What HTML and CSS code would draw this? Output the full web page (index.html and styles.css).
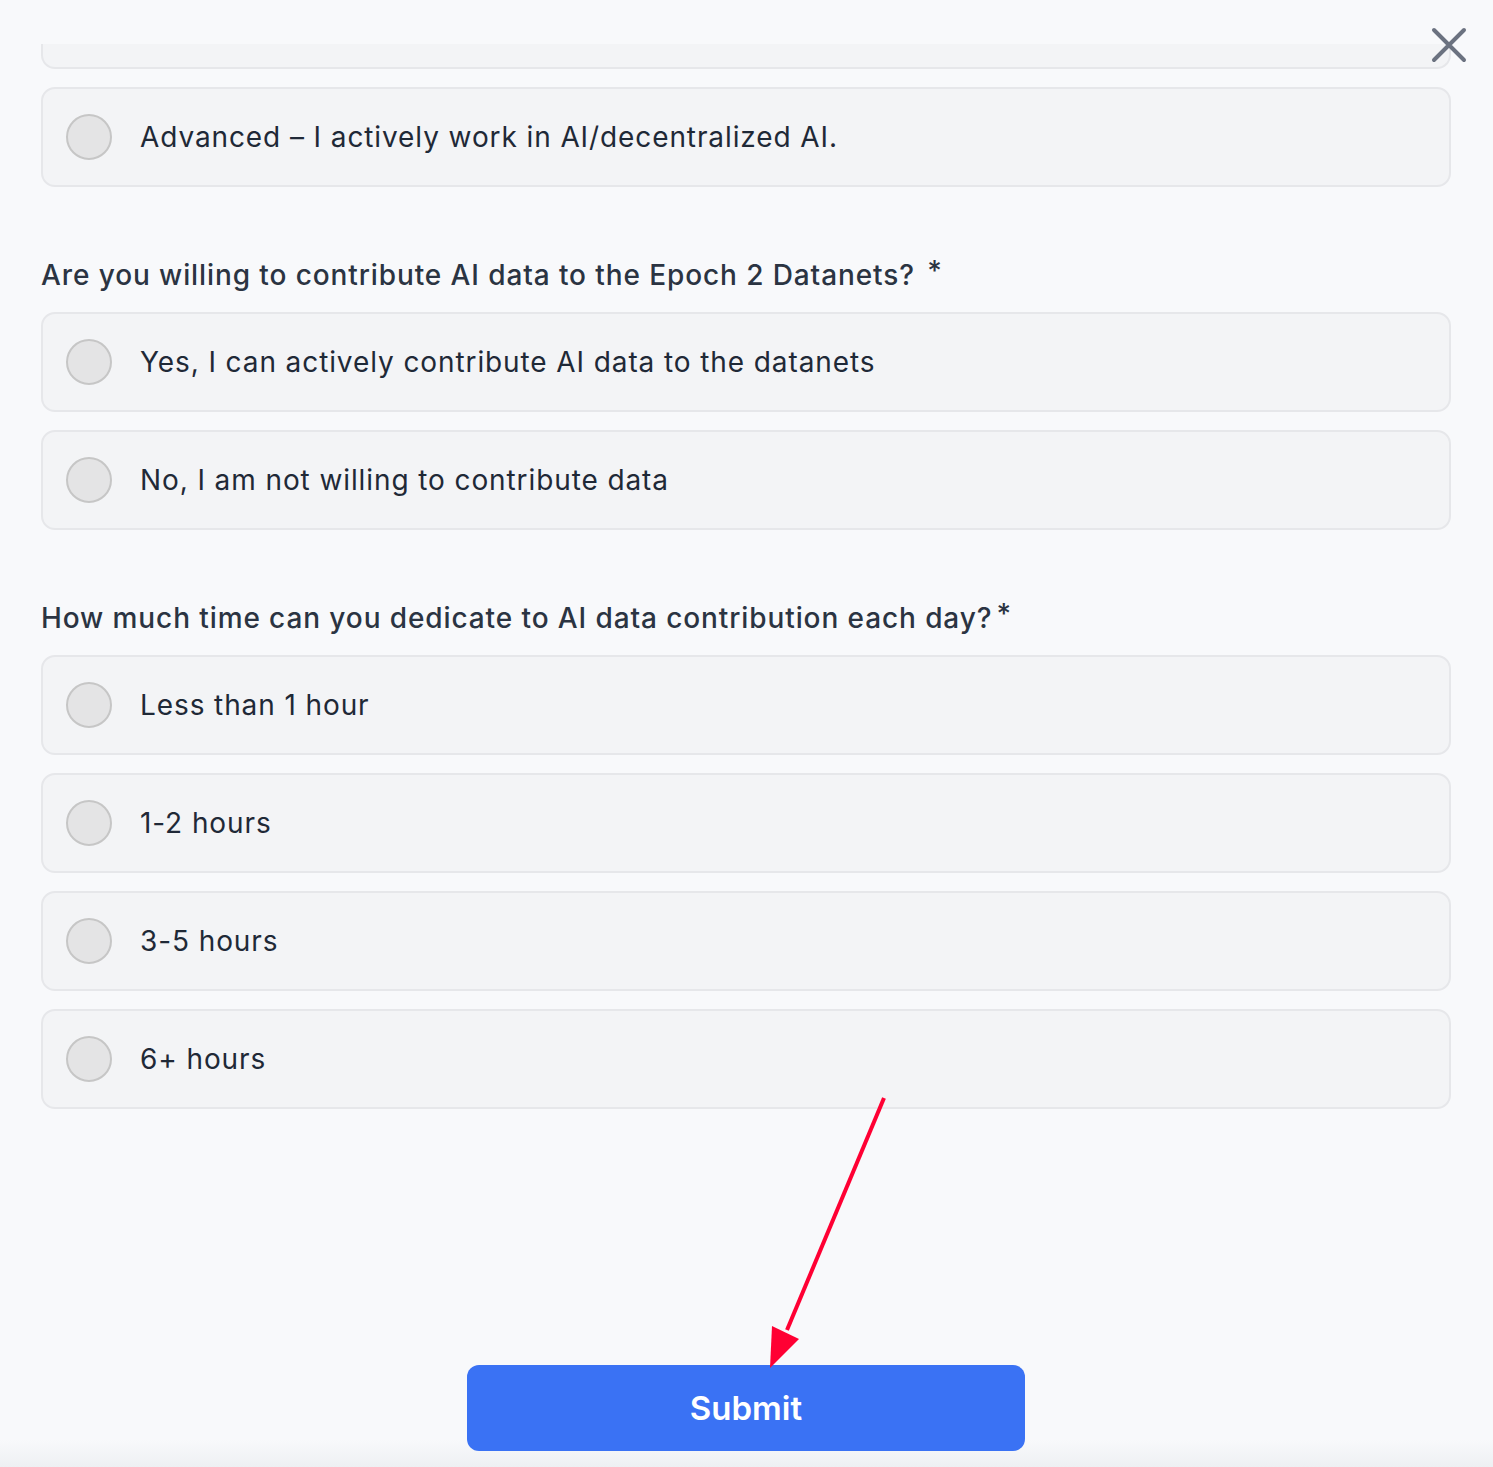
FILE: index.html
```html
<!DOCTYPE html>
<html>
<head>
<meta charset="utf-8">
<link rel="stylesheet" href="styles.css">
</head>
<body>
<div class="modal">
  <button class="close" aria-label="Close">
    <svg width="36" height="36" viewBox="0 0 36 36"><path d="M3 3L33 33M33 3L3 33" stroke="#6b7280" stroke-width="4" stroke-linecap="round"/></svg>
  </button>
  <div class="scroll">
    <div class="option option-cut"></div>
    <label class="option"><span class="radio"></span><span class="opt-text">Advanced – I actively work in AI/decentralized AI.</span></label>

    <div class="question">Are you willing to contribute AI data to the Epoch 2 Datanets? <span class="req">*</span></div>
    <label class="option"><span class="radio"></span><span class="opt-text">Yes, I can actively contribute AI data to the datanets</span></label>
    <label class="option"><span class="radio"></span><span class="opt-text">No, I am not willing to contribute data</span></label>

    <div class="question">How much time can you dedicate to AI data contribution each day?<span class="req">*</span></div>
    <label class="option"><span class="radio"></span><span class="opt-text">Less than 1 hour</span></label>
    <label class="option"><span class="radio"></span><span class="opt-text">1-2 hours</span></label>
    <label class="option"><span class="radio"></span><span class="opt-text">3-5 hours</span></label>
    <label class="option"><span class="radio"></span><span class="opt-text">6+ hours</span></label>

    <div class="actions">
      <button class="submit">Submit</button>
    </div>
  </div>
  <svg class="arrow" width="1493" height="1467" viewBox="0 0 1493 1467">
    <line x1="884" y1="1098" x2="787" y2="1330" stroke="#ff0033" stroke-width="4"/>
    <polygon points="770,1368 772,1326 799,1339" fill="#ff0033"/>
  </svg>
</div>
</body>
</html>
```
FILE: styles.css
```css
* { box-sizing: border-box; }
html, body { margin: 0; padding: 0; }
body {
  background: #f8f9fb;
  font-family: "Inter", "Lato", sans-serif;
  color: #1f2937;
  width: 1493px;
  height: 1467px;
  overflow: hidden;
}
.modal {
  position: relative;
  width: 1493px;
  height: 1467px;
  background: linear-gradient(to bottom, #f8f9fb 0, #f8f9fb 1440px, #eef0f3 1467px);
}
.close {
  position: absolute;
  top: 27px;
  left: 1431px;
  width: 36px;
  height: 36px;
  padding: 0;
  border: 0;
  background: transparent;
}
.scroll {
  padding: 44px 42px 0 41px;
  display: flex;
  flex-direction: column;
}
.option {
  display: flex;
  align-items: center;
  height: 100px;
  background: #f3f4f6;
  border: 2px solid #e6e7ea;
  border-radius: 14px;
  padding-left: 23px;
  margin-bottom: 18px;
}
.option-cut {
  height: 25px;
  border-top: 0;
  border-radius: 0 0 14px 14px;
  margin-bottom: 18px;
}
.radio {
  width: 46px;
  height: 46px;
  border-radius: 50%;
  background: #e4e4e5;
  border: 2px solid #c6c6c6;
  flex: none;
}
.opt-text {
  margin-left: 28px;
  font-size: 28px;
  letter-spacing: 0.9px;
  color: #1f2937;
}
.question {
  margin-top: 52px;
  margin-bottom: 19px;
  height: 36px;
  line-height: 36px;
  font-size: 28px;
  font-weight: 500;
  letter-spacing: 0.9px;
  color: #2b3442;
}
.req {
  display: inline-block;
  font-size: 28px;
  line-height: 28px;
  vertical-align: top;
  margin-left: 4px;
}
.actions {
  display: flex;
  justify-content: center;
  margin-top: 238px;
}
.submit {
  width: 558px;
  height: 86px;
  background: #3a72f4;
  color: #fff;
  border: 0;
  border-radius: 12px;
  font-family: "Inter", "Lato", sans-serif;
  font-size: 33px;
  font-weight: 600;
}
.arrow {
  position: absolute;
  top: 0;
  left: 0;
  pointer-events: none;
}
```
